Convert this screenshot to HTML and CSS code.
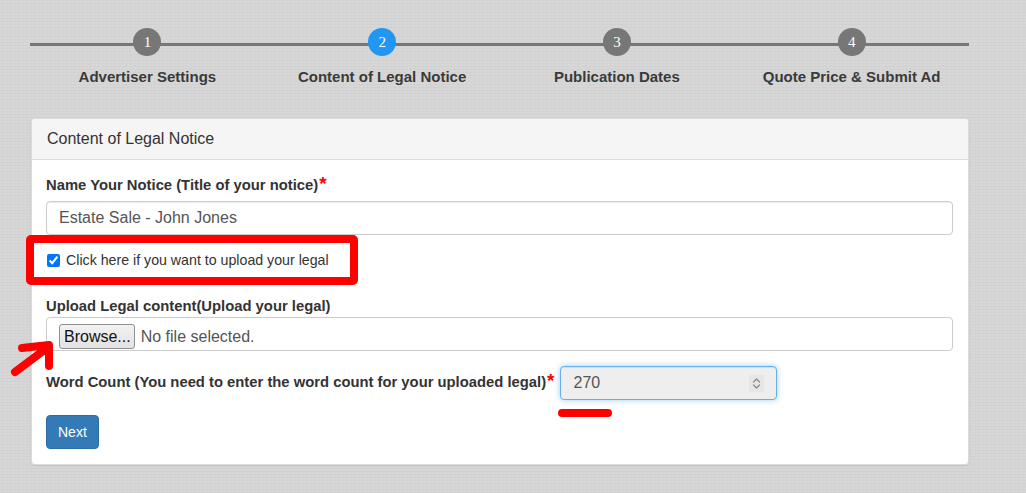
FILE: index.html
```html
<!DOCTYPE html>
<html lang="en">
<head>
<meta charset="utf-8">
<title>Content of Legal Notice</title>
<link rel="stylesheet" href="styles.css">
</head>
<body>
<div class="page">
  <div class="stepper">
    <div class="step"><span class="dot">1</span><span class="step-label">Advertiser Settings</span></div>
    <div class="step"><span class="dot dot-active">2</span><span class="step-label">Content of Legal Notice</span></div>
    <div class="step"><span class="dot">3</span><span class="step-label">Publication Dates</span></div>
    <div class="step"><span class="dot">4</span><span class="step-label">Quote Price &amp; Submit Ad</span></div>
  </div>

  <div class="panel">
    <div class="panel-heading">Content of Legal Notice</div>
    <div class="panel-body">
      <div class="group">
        <label class="label">Name Your Notice (Title of your notice)<span class="req">*</span></label>
        <div class="control">Estate Sale - John Jones</div>
      </div>
      <div class="checkbox-row">
        <input type="checkbox" class="check" checked>
        <span class="check-text">Click here if you want to upload your legal</span>
      </div>
      <div class="group group-upload">
        <label class="label label-tight">Upload Legal content(Upload your legal)</label>
        <div class="file-box">
          <span class="browse">Browse...</span>
          <span class="file-text">No file selected.</span>
        </div>
      </div>
      <div class="inline-row">
        <label class="label">Word Count (You need to enter the word count for your uploaded legal)<span class="req">*</span></label>
        <div class="number-box">
          <span class="number-value">270</span>
          <span class="spinner">
            <svg width="15" height="17" viewBox="0 0 15 17"><path d="M4.5 7 L7.5 4 L10.5 7 M4.5 10 L7.5 13 L10.5 10" fill="none" stroke="#888" stroke-width="1.2" stroke-linecap="round" stroke-linejoin="round"/></svg>
          </span>
        </div>
      </div>
      <button class="btn-next" type="button">Next</button>
    </div>
  </div>

  <div class="mark-box"></div>
  <svg class="mark-arrow" width="70" height="55" viewBox="0 330 70 55">
    <path d="M15 372 L47 348 M22 348 L49 345 L49 366" fill="none" stroke="#ff0000" stroke-width="8" stroke-linecap="round" stroke-linejoin="round"/>
  </svg>
  <div class="mark-underline"></div>
</div>
</body>
</html>
```

FILE: styles.css
```css
* { box-sizing: border-box; }

html, body {
  margin: 0;
  padding: 0;
}

body {
  width: 1026px;
  height: 493px;
  overflow: hidden;
  font-family: "Liberation Sans", Arial, sans-serif;
  color: #333;
  background-color: #d6d6d6;
  background-image:
    repeating-linear-gradient(0deg, rgba(0,0,0,0.025) 0 1px, transparent 1px 3px),
    repeating-linear-gradient(90deg, rgba(255,255,255,0.06) 0 1px, transparent 1px 4px);
}

.page {
  position: relative;
  width: 1026px;
  height: 493px;
  padding: 28px 0 0 30px;
}

/* Stepper */
.stepper {
  display: flex;
  width: 939px;
  background: linear-gradient(#777, #777) no-repeat 0 15px / 100% 3px;
}

.step {
  flex: 1;
  display: flex;
  flex-direction: column;
  align-items: center;
}

.dot {
  width: 28px;
  height: 28px;
  border-radius: 50%;
  background: #777;
  color: #fff;
  font-family: "Liberation Serif", "Times New Roman", serif;
  font-size: 15px;
  line-height: 28px;
  text-align: center;
}

.dot-active {
  background: #2196f3;
}

.step-label {
  margin-top: 11px;
  font-size: 15px;
  line-height: 20px;
  font-weight: 700;
  color: #3a3a3a;
}

/* Panel */
.panel {
  margin: 31px 0 0 1px;
  width: 938px;
  background: #fff;
  border: 1px solid #dcdcdc;
  border-radius: 4px;
  box-shadow: 0 1px 2px rgba(0,0,0,0.08);
}

.panel-heading {
  padding: 10px 15px;
  font-size: 16px;
  line-height: 20px;
  color: #333;
  background: #f5f5f5;
  border-bottom: 1px solid #ddd;
  border-radius: 3px 3px 0 0;
}

.panel-body {
  padding: 15px 15px 15px 14px;
  display: flex;
  flex-direction: column;
  align-items: flex-start;
}

.group {
  display: flex;
  flex-direction: column;
  width: 907px;
}

.label {
  font-size: 14.8px;
  line-height: 20px;
  font-weight: 700;
  color: #333;
  margin-bottom: 6px;
}

.label-tight {
  margin-bottom: 1px;
}

.req {
  color: #f00;
  font-size: 19px;
  line-height: 14px;
  margin-left: 1px;
}

.control {
  height: 34px;
  border: 1px solid #ccc;
  border-radius: 4px;
  padding: 0 12px;
  font-size: 16px;
  line-height: 32px;
  color: #555;
  box-shadow: inset 0 1px 1px rgba(0,0,0,0.075);
}

.checkbox-row {
  display: flex;
  align-items: center;
  margin-top: 15px;
  height: 20px;
}

.check {
  width: 13px;
  height: 13px;
  margin: 0 6px 0 1px;
  accent-color: #0075ff;
}

.check-text {
  font-size: 14.2px;
  color: #333;
}

.group-upload {
  margin-top: 26px;
}

.file-box {
  height: 34px;
  border: 1px solid #ccc;
  border-radius: 4px;
  padding: 6px 12px 0;
  display: flex;
  align-items: flex-start;
}

.browse {
  height: 25px;
  padding: 0 3px 0 4px;
  border: 1px solid #8f8f8f;
  border-radius: 3px;
  background: linear-gradient(#f2f2f2, #e2e2e2);
  font-size: 16px;
  line-height: 24px;
  color: #111;
}

.file-text {
  margin-left: 6px;
  font-size: 16px;
  line-height: 26px;
  color: #555;
}

.inline-row {
  display: flex;
  align-items: center;
  margin-top: 15px;
}

.inline-row .label {
  margin: -2px 6px 0 0;
}

.number-box {
  width: 217px;
  height: 34px;
  border: 1px solid #66afe9;
  border-radius: 4px;
  background: #eee;
  box-shadow: inset 0 1px 1px rgba(0,0,0,0.075), 0 0 6px rgba(102,175,233,0.6);
  display: flex;
  align-items: center;
  justify-content: space-between;
  padding: 0 12px 0 12px;
}

.number-value {
  font-size: 16px;
  color: #555;
}

.spinner {
  display: flex;
  width: 15px;
  height: 17px;
  background: #e6e6e6;
}

.btn-next {
  margin-top: 15px;
  height: 34px;
  padding: 0 11px;
  border: 1px solid #2e6da4;
  border-radius: 4px;
  background: #337ab7;
  color: #fff;
  font-family: "Liberation Sans", Arial, sans-serif;
  font-size: 14px;
  line-height: 32px;
  margin-left: 0;
}

/* Annotations drawn over the screenshot */
.mark-box {
  position: absolute;
  left: 26px;
  top: 235px;
  width: 332px;
  height: 50px;
  border: 8px solid #f00;
  border-radius: 5px;
}

.mark-arrow {
  position: absolute;
  left: 0;
  top: 330px;
}

.mark-underline {
  position: absolute;
  left: 558px;
  top: 409px;
  width: 54px;
  height: 8px;
  border-radius: 4px;
  background: #f00;
}
```
